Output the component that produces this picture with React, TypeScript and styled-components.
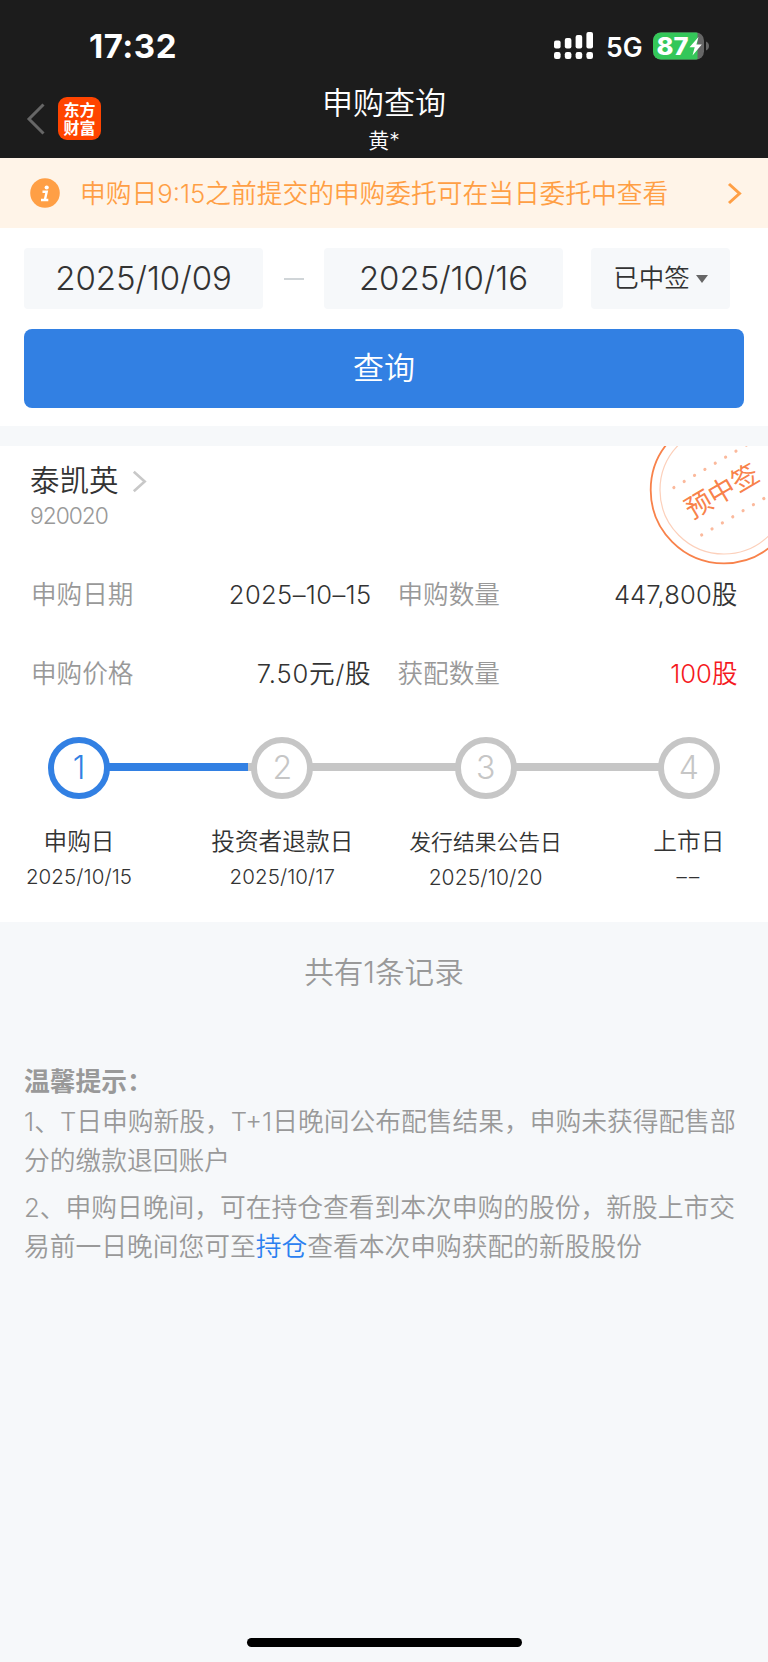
import React from 'react';
import styled, { createGlobalStyle } from 'styled-components';

const GlobalStyle = createGlobalStyle`
  * { box-sizing: border-box; }
  body {
    margin: 0;
    background: #f6f8fa;
    font-family: Inter, "Noto Sans CJK SC", sans-serif;
    font-weight: 350;
    color: #333;
  }
  button { font-family: inherit; font-weight: inherit; border: 0; padding: 0; }
  svg { display: block; flex: none; }
`;

const Screen = styled.div`
  width: 768px;
  height: 1662px;
  display: flex;
  flex-direction: column;
  background: #f6f8fa;
  overflow: hidden;
`;

const Header = styled.header`
  height: 158px;
  flex: none;
  background: #1c1c1c;
  color: #fff;
`;

const StatusBar = styled.div`
  height: 81px;
  padding: 11px 58px 0 89px;
  display: flex;
  align-items: center;
`;

const Clock = styled.div`
  flex: 1;
  font-size: 33px;
  font-weight: 700;
  line-height: 40px;
  letter-spacing: 0.5px;
`;

const Network = styled.div`
  font-size: 26.5px;
  font-weight: 600;
  line-height: 40px;
  width: 47px;
  margin-left: 13px;
  padding-top: 1px;
`;

const NavBar = styled.div`
  height: 77px;
  display: grid;
  grid-template-columns: 200px 1fr 200px;
`;

const NavLeft = styled.div`
  display: flex;
  align-items: flex-start;
  padding: 16px 0 0 26px;
`;

const AppLogo = styled.div`
  width: 43px;
  height: 43px;
  margin-left: 13px;
  padding: 3px 5px 0 5.5px;
  border-radius: 9px;
  background: #ff4400;
  font-family: "Noto Sans CJK SC", sans-serif;
  font-size: 16px;
  font-weight: 700;
  line-height: 18px;
  word-break: break-all;
`;

const NavTitle = styled.div`
  display: flex;
  flex-direction: column;
  align-items: center;
  text-align: center;
`;

const Title = styled.div`
  font-size: 31px;
  line-height: 44px;
`;

const Account = styled.div`
  font-size: 21px;
  line-height: 30px;
  margin-top: 1px;
`;

const Notice = styled.div`
  height: 70px;
  flex: none;
  display: flex;
  align-items: center;
  padding: 0 26px 0 30px;
  background: #fff4e8;
  color: #ff9f45;
`;

const NoticeText = styled.div`
  flex: 1;
  margin-left: 20px;
  padding-top: 1px;
  font-size: 25.73px;
  line-height: 40px;
  white-space: nowrap;
`;

const Filters = styled.section`
  height: 198px;
  flex: none;
  padding: 20px 24px 0;
  background: #fff;
`;

const FilterRow = styled.div`
  display: flex;
  align-items: center;
  height: 61px;
`;

const DateBox = styled.div`
  width: 239px;
  height: 61px;
  border-radius: 4px;
  background: #f6f8fa;
  text-align: center;
  font-size: 33px;
  line-height: 60px;
  letter-spacing: -0.05px;
`;

const Dash = styled.div`
  width: 20px;
  height: 2px;
  margin: 0 20.5px;
  background: #d0d5d8;
`;

const Select = styled.div`
  width: 139px;
  height: 61px;
  margin-left: 28px;
  border-radius: 4px;
  background: #f6f8fa;
  display: flex;
  align-items: center;
  justify-content: center;
  gap: 6px;
  font-size: 25.5px;
  line-height: 58px;
`;

const SelectText = styled.span`
  padding-bottom: 1px;
`;

const Caret = styled.i`
  border: 6.5px solid transparent;
  border-top: 8px solid #666;
  border-bottom: 0;
`;

const QueryButton = styled.button`
  display: block;
  width: 720px;
  height: 79px;
  margin-top: 20px;
  border-radius: 8px;
  background: #3280e3;
  color: #fff;
  font-size: 31px;
  line-height: 77px;
  padding-bottom: 2px;
`;

const Card = styled.section`
  position: relative;
  height: 476px;
  flex: none;
  margin-top: 20px;
  background: #fff;
  overflow: hidden;
`;

const Stamp = styled.svg`
  position: absolute;
  left: 648.5px;
  top: -31px;
`;

const StockName = styled.div`
  display: flex;
  align-items: center;
  gap: 13px;
  height: 40px;
  margin: 15px 0 0 30px;
  font-size: 29.5px;
  line-height: 34px;
`;

const StockNameText = styled.span`
  padding-bottom: 3px;
`;

const StockCode = styled.div`
  margin: 0 0 1px 30px;
  font-size: 22.8px;
  line-height: 30px;
  color: #999;
  letter-spacing: -1px;
`;

const Details = styled.div`
  display: grid;
  grid-template-columns: 340.5px 340px;
  column-gap: 26px;
  grid-auto-rows: 79px;
  padding: 22px 0 0 31px;
  font-size: 25.6px;
`;

const Detail = styled.div`
  display: flex;
  align-items: center;
  justify-content: space-between;
  line-height: 40px;
  padding-top: 3px;
`;

const Label = styled.span`
  color: #999;
`;

const Value = styled.span<{ $highlight?: boolean; $spacing?: number }>`
  color: ${(p) => (p.$highlight ? '#f5191e' : '#333')};
  letter-spacing: ${(p) => p.$spacing ?? 0}px;
`;

const Steps = styled.div`
  display: flex;
  padding: 25px 0 0 48px;
`;

const Step = styled.div`
  width: 62px;
  display: flex;
  flex-direction: column;
  align-items: center;
  flex: none;
  white-space: nowrap;
`;

const StepCircle = styled.div<{ $active?: boolean }>`
  width: 62px;
  height: 62px;
  border-radius: 50%;
  border: 6px solid ${(p) => (p.$active ? '#3280e3' : '#c6c6c6')};
  color: ${(p) => (p.$active ? '#3280e3' : '#c6c6c6')};
  font-size: 32px;
  font-weight: 300;
  line-height: 50px;
  text-align: center;
`;

const StepName = styled.div<{ $small?: boolean }>`
  margin-top: 26px;
  font-size: ${(p) => (p.$small ? 21.8 : 23.7)}px;
  line-height: 34px;
`;

const StepDate = styled.div<{ $small?: boolean; $spacing?: number }>`
  margin-top: ${(p) => (p.$small ? 2 : 1)}px;
  font-size: ${(p) => (p.$small ? 21 : 20.5)}px;
  line-height: 34px;
  letter-spacing: ${(p) => p.$spacing ?? 0.1}px;
`;

const Connector = styled.div<{ $progress: number }>`
  width: 143.3px;
  height: 8px;
  margin: 26px -1px 0;
  background: linear-gradient(to right, #3280e3 ${(p) => p.$progress}%, #c6c6c6 ${(p) => p.$progress}%);
`;

const Total = styled.div`
  margin-top: 29px;
  text-align: center;
  font-size: 29.6px;
  line-height: 42px;
  color: #999;
`;

const Tips = styled.section`
  flex: 1;
  padding: 69px 24px 0;
  font-size: 25.76px;
  line-height: 39.5px;
  color: #999;
  white-space: nowrap;
`;

const TipsTitle = styled.div`
  font-weight: 600;
`;

const Tip = styled.p`
  margin: 0 0 7px;
`;

const Link = styled.a`
  color: #2b80f0;
`;

const HomeIndicator = styled.div`
  width: 275px;
  height: 9px;
  flex: none;
  margin: 0 auto 15px;
  border-radius: 5px;
  background: #000;
`;

const signal = [
  { x: 0, h: 8 },
  { x: 10.8, h: 10.5 },
  { x: 21.6, h: 13.5 },
  { x: 32.4, h: 16.5 },
];

const steps = [
  { name: '申购日', date: '2025/10/15', active: true, progress: 97.2 },
  { name: '投资者退款日', date: '2025/10/17', progress: 0 },
  { name: '发行结果公告日', date: '2025/10/20', small: true, progress: 0 },
  { name: '上市日', date: '––', spacing: 2.2 },
];

const stampDots = [0, 1, 2, 3, 4, 5, 6, 7, 8];

function SignalIcon() {
  return (
    <svg width="39" height="28" viewBox="0 0 39 28" fill="#fff">
      {signal.map((b) => (
        <g key={b.x}>
          <rect x={b.x} y={16.5 - b.h} width="6.6" height={b.h} rx="2" />
          <rect x={b.x} y="20" width="6.6" height="7" rx="2.2" />
        </g>
      ))}
    </svg>
  );
}

function BatteryIcon() {
  return (
    <svg width="57" height="28" viewBox="0 0 57 28">
      <defs>
        <clipPath id="cell"><rect x="0" y="0.5" width="51" height="27" rx="8" /></clipPath>
      </defs>
      <g clipPath="url(#cell)">
        <rect width="51" height="28" fill="#666" />
        <rect width="44.5" height="28" fill="#34c759" />
      </g>
      <path d="M53 9.500c4 1.500 4 7.500 0 9z" fill="#666" />
      <text x="3.5" y="22.5" fontSize="24" fontWeight="800" fill="#fff" textLength="32" lengthAdjust="spacingAndGlyphs">87</text>
      <path d="M45.500 5 36.500 15.300h5.200L39.500 23.500l9.300-11h-5.400z" fill="#fff" />
    </svg>
  );
}

function Chevron({ width, height, color, stroke }: { width: number; height: number; color: string; stroke: number }) {
  const p = stroke / 2 + 0.5;
  return (
    <svg width={width} height={height}>
      <path
        d={`M${p} ${p}L${width - p - 0.5} ${height / 2}L${p} ${height - p}`}
        fill="none"
        stroke={color}
        strokeWidth={stroke}
      />
    </svg>
  );
}

function WinningStamp() {
  return (
    <Stamp width="150" height="150" viewBox="-75 -75 150 150">
      <circle r="73.3" fill="none" stroke="#f8824b" strokeWidth="1.8" />
      <circle r="64" fill="none" stroke="#fcd0bb" strokeWidth="1.2" />
      <g transform="rotate(-30.4)">
        {stampDots.map((i) => (
          <g key={i} fill="#fbb99c">
            <circle cx={-42 + i * 12} cy="-27.5" r="1.6" />
            <circle cx={-42 + i * 12} cy="27.5" r="1.6" />
          </g>
        ))}
        <text x="-2.5" y="9.5" textAnchor="middle" fontSize="26.8" fontWeight="400" fill="#f8824b">预中签</text>
      </g>
    </Stamp>
  );
}

export default function App() {
  return (
    <Screen>
      <GlobalStyle />
      <Header>
        <StatusBar>
          <Clock>17:32</Clock>
          <SignalIcon />
          <Network>5G</Network>
          <BatteryIcon />
        </StatusBar>
        <NavBar>
          <NavLeft>
            <svg width="19" height="43" viewBox="0 0 19 43">
              <path d="M17.5 7.5 3 22l14.500 14.500" fill="none" stroke="#666" strokeWidth="3" />
            </svg>
            <AppLogo>东方财富</AppLogo>
          </NavLeft>
          <NavTitle>
            <Title>申购查询</Title>
            <Account>黄*</Account>
          </NavTitle>
        </NavBar>
      </Header>

      <Notice>
        <svg width="30" height="30" viewBox="0 0 30 30">
          <circle cx="15" cy="15" r="14.8" fill="#ff9f45" />
          <circle cx="16.700" cy="9.500" r="2.100" fill="#fff" />
          <path d="M12.500 13.700h4.200l-1.800 8M11 22h7.300" fill="none" stroke="#fff" strokeWidth="2.400" />
        </svg>
        <NoticeText>申购日9:15之前提交的申购委托可在当日委托中查看</NoticeText>
        <Chevron width={15} height={23} color="#ff9f45" stroke={3} />
      </Notice>

      <Filters>
        <FilterRow>
          <DateBox>2025/10/09</DateBox>
          <Dash />
          <DateBox>2025/10/16</DateBox>
          <Select>
            <SelectText>已中签</SelectText>
            <Caret />
          </Select>
        </FilterRow>
        <QueryButton>查询</QueryButton>
      </Filters>

      <Card>
        <WinningStamp />
        <StockName>
          <StockNameText>泰凯英</StockNameText>
          <Chevron width={15} height={23} color="#c8c8c8" stroke={2.6} />
        </StockName>
        <StockCode>920020</StockCode>
        <Details>
          <Detail>
            <Label>申购日期</Label>
            <Value $spacing={0.35}>2025–10–15</Value>
          </Detail>
          <Detail>
            <Label>申购数量</Label>
            <Value $spacing={0.1}>447,800股</Value>
          </Detail>
          <Detail>
            <Label>申购价格</Label>
            <Value $spacing={0.8}>7.50元/股</Value>
          </Detail>
          <Detail>
            <Label>获配数量</Label>
            <Value $highlight>100股</Value>
          </Detail>
        </Details>
        <Steps>
          {steps.map((s, i) => (
            <React.Fragment key={s.name}>
              <Step>
                <StepCircle $active={s.active}>{i + 1}</StepCircle>
                <StepName $small={s.small}>{s.name}</StepName>
                <StepDate $small={s.small} $spacing={s.spacing}>{s.date}</StepDate>
              </Step>
              {s.progress !== undefined && <Connector $progress={s.progress} />}
            </React.Fragment>
          ))}
        </Steps>
      </Card>

      <Total>共有1条记录</Total>

      <Tips>
        <TipsTitle>温馨提示：</TipsTitle>
        <Tip>
          1、T日申购新股，T+1日晚间公布配售结果，申购未获得配售部
          <br />
          分的缴款退回账户
        </Tip>
        <Tip>
          2、申购日晚间，可在持仓查看到本次申购的股份，新股上市交
          <br />
          易前一日晚间您可至<Link>持仓</Link>查看本次申购获配的新股股份
        </Tip>
      </Tips>
      <HomeIndicator />
    </Screen>
  );
}
